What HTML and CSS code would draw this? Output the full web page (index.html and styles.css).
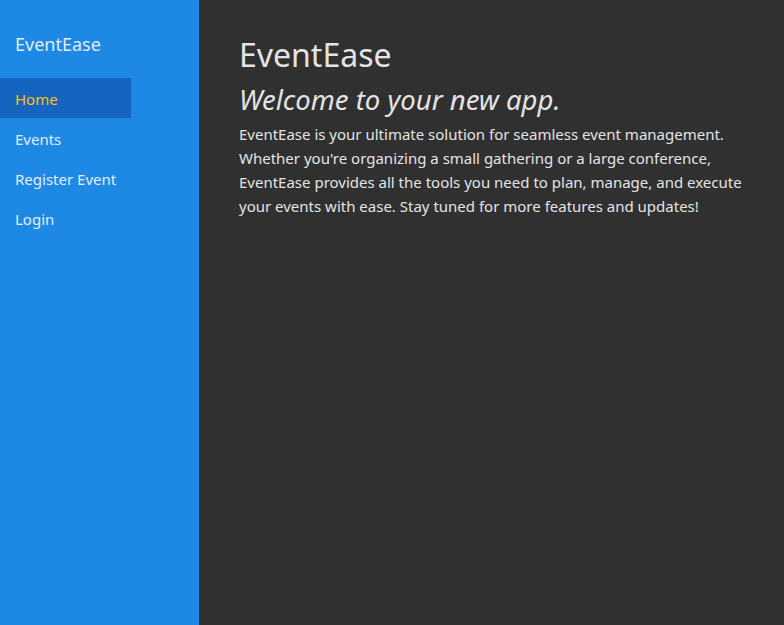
FILE: index.html
```html
<!DOCTYPE html>
<html lang="en">
<head>
<meta charset="utf-8">
<title>EventEase</title>
<link rel="stylesheet" href="styles.css">
</head>
<body>
<div class="app">
  <aside class="sidebar">
    <div class="brand">EventEase</div>
    <nav class="nav">
      <a class="nav-item active" href="#">Home</a>
      <a class="nav-item" href="#">Events</a>
      <a class="nav-item" href="#">Register Event</a>
      <a class="nav-item" href="#">Login</a>
    </nav>
  </aside>
  <main class="main">
    <h1 class="title">EventEase</h1>
    <h2 class="subtitle">Welcome to your new app.</h2>
    <p class="intro">EventEase is your ultimate solution for seamless event management. Whether you're organizing a small gathering or a large conference, EventEase provides all the tools you need to plan, manage, and execute your events with ease. Stay tuned for more features and updates!</p>
  </main>
</div>
</body>
</html>
```
FILE: styles.css
```css
html, body {
  margin: 0;
  padding: 0;
  height: 100%;
}
body {
  font-family: "Noto Sans", sans-serif;
  background: #303030;
  color: #e4e4e4;
}
.app {
  display: flex;
  height: 100%;
}
.sidebar {
  width: 199px;
  flex-shrink: 0;
  background: #1e88e5;
  display: flex;
  flex-direction: column;
}
.brand {
  padding: 32px 15px 0;
  height: 46px;
  font-size: 18px;
  line-height: 24px;
  color: #e3edf7;
}
.nav {
  display: flex;
  flex-direction: column;
}
.nav-item {
  display: block;
  width: 116px;
  height: 38px;
  padding-top: 2px;
  line-height: 38px;
  padding-left: 15px;
  font-size: 15px;
  color: #e3edf7;
  text-decoration: none;
}
.nav-item.active {
  background: #1565c0;
  color: #ffc107;
}
.main {
  flex: 1;
  padding: 32px 40px 0;
}
.title {
  margin: 0;
  font-size: 32px;
  font-weight: 400;
  line-height: 46px;
}
.subtitle {
  margin: 0;
  font-size: 27.5px;
  font-style: italic;
  font-weight: 400;
  line-height: 44px;
}
.intro {
  margin: 0;
  font-size: 15px;
  line-height: 24px;
}
```
